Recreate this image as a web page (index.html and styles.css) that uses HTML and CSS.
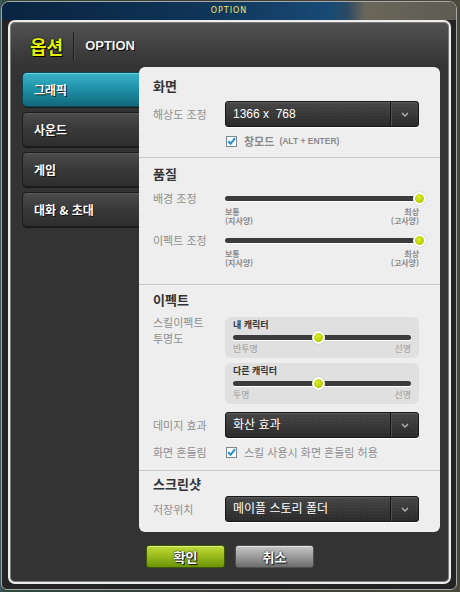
FILE: index.html
```html
<!DOCTYPE html>
<html lang="ko">
<head>
<meta charset="utf-8">
<title>OPTION</title>
<link rel="stylesheet" href="styles.css">
</head>
<body>
<div class="window">
  <div class="titlebar">OPTION</div>
  <div class="frame">
    <div class="header">
      <span class="title-ko">옵션</span>
      <span class="title-sep"></span>
      <span class="title-en">OPTION</span>
    </div>
    <div class="main">
      <nav class="tabs">
        <div class="tab active">그래픽</div>
        <div class="tab">사운드</div>
        <div class="tab">게임</div>
        <div class="tab">대화 &amp; 초대</div>
      </nav>
      <div class="panel">
        <section class="sec sec-screen">
          <h2 class="sec-title">화면</h2>
          <div class="row row-select">
            <div class="lbl">해상도 조정</div>
            <div class="select">
              <span class="select-text">1366 x&nbsp;&nbsp;768</span>
              <span class="select-btn"><svg width="8" height="5" viewBox="0 0 8 5"><polyline points="1,1 4,4 7,1" fill="none" stroke="#b8b8b8" stroke-width="1.3"/></svg></span>
            </div>
          </div>
          <div class="row row-check">
            <div class="lbl"></div>
            <span class="checkbox"><svg width="9" height="9" viewBox="0 0 9 9"><polyline points="1.2,4.2 3.6,6.8 8,1.2" fill="none" stroke="#1e8fd2" stroke-width="2"/></svg></span>
            <span class="check-strong">창모드</span><span class="hint">(ALT + ENTER)</span>
          </div>
        </section>

        <section class="sec sec-quality">
          <h2 class="sec-title">품질</h2>
          <div class="row row-slider first">
            <div class="lbl">배경 조정</div>
            <div class="slider"><div class="track"></div><div class="knob" style="left:100%"></div></div>
          </div>
          <div class="scale">
            <div class="scale-col"><div class="scale-line">보통</div><div class="scale-line">(지사양)</div></div>
            <div class="scale-col r"><div class="scale-line">최상</div><div class="scale-line">(고사양)</div></div>
          </div>
          <div class="row row-slider second">
            <div class="lbl">이펙트 조정</div>
            <div class="slider"><div class="track"></div><div class="knob" style="left:100%"></div></div>
          </div>
          <div class="scale">
            <div class="scale-col"><div class="scale-line">보통</div><div class="scale-line">(지사양)</div></div>
            <div class="scale-col r"><div class="scale-line">최상</div><div class="scale-line">(고사양)</div></div>
          </div>
        </section>

        <section class="sec sec-effect">
          <h2 class="sec-title">이펙트</h2>
          <div class="row row-effect">
            <div class="lbl lbl-multi">스킬이펙트<br>투명도</div>
            <div class="subboxes">
              <div class="subbox">
                <div class="sub-title">내 캐릭터</div>
                <div class="sub-slider"><div class="track"></div><div class="knob" style="left:48.3%"></div></div>
                <div class="sub-scale"><span>반투명</span><span>선명</span></div>
              </div>
              <div class="subbox">
                <div class="sub-title">다른 캐릭터</div>
                <div class="sub-slider"><div class="track"></div><div class="knob" style="left:47.8%"></div></div>
                <div class="sub-scale"><span>투명</span><span>선명</span></div>
              </div>
            </div>
          </div>
          <div class="row row-damage">
            <div class="lbl">데미지 효과</div>
            <div class="select">
              <span class="select-text">화산 효과</span>
              <span class="select-btn"><svg width="8" height="5" viewBox="0 0 8 5"><polyline points="1,1 4,4 7,1" fill="none" stroke="#b8b8b8" stroke-width="1.3"/></svg></span>
            </div>
          </div>
          <div class="row row-shake">
            <div class="lbl">화면 흔들림</div>
            <span class="checkbox"><svg width="9" height="9" viewBox="0 0 9 9"><polyline points="1.2,4.2 3.6,6.8 8,1.2" fill="none" stroke="#1e8fd2" stroke-width="2"/></svg></span>
            <span class="check-text">스킬 사용시 화면 흔들림 허용</span>
          </div>
        </section>

        <section class="sec sec-shot">
          <h2 class="sec-title">스크린샷</h2>
          <div class="row row-folder">
            <div class="lbl">저장위치</div>
            <div class="select">
              <span class="select-text">메이플 스토리 폴더</span>
              <span class="select-btn"><svg width="8" height="5" viewBox="0 0 8 5"><polyline points="1,1 4,4 7,1" fill="none" stroke="#b8b8b8" stroke-width="1.3"/></svg></span>
            </div>
          </div>
        </section>
      </div>
    </div>
    <div class="buttons">
      <div class="btn btn-ok">확인</div>
      <div class="btn btn-cancel">취소</div>
    </div>
  </div>
</div>
</body>
</html>
```

FILE: styles.css
```css
* {
  box-sizing: border-box;
  margin: 0;
  padding: 0;
}

html, body {
  width: 460px;
  height: 592px;
  overflow: hidden;
}

body {
  background: linear-gradient(90deg, #3e5a66 0px, #2f4a3c 4px, #3a3c36 50%, #4a4a3c 100%);
  font-family: "Noto Sans CJK KR", "Noto Sans", sans-serif;
}

.window {
  margin: 1px 0 0 1px;
  width: 456px;
  height: 589px;
  border: 1px solid #a8a8a8;
  border-radius: 8px 8px 6px 6px;
  background: #242424;
  overflow: hidden;
}

.titlebar {
  height: 18px;
  background: linear-gradient(90deg, #0a2440 0%, #0f3558 45%, #184a76 72%, #2a4a62 76%, #6a665a 80%, #5e5c52 100%);
  color: #f2e46a;
  font: 8px/18px "DejaVu Sans", sans-serif;
  letter-spacing: 1px;
  text-align: center;
}

.frame {
  margin-left: 6px;
  width: 443px;
  height: 564px;
  border: 2px solid #ececec;
  border-radius: 7px;
  background: linear-gradient(#525252 0px, #3a3a3a 34px, #333333 46px, #333333 100%);
  box-shadow: inset 0 0 0 1px #7c7c7c;
  display: flex;
  flex-direction: column;
}

.header {
  height: 45px;
  display: flex;
  align-items: center;
  padding: 3px 0 0 20px;
}

.title-ko {
  font: bold 18px/22px "Noto Sans CJK KR", sans-serif;
  color: #e6f200;
  text-shadow: 1px 1px 0 #000, 0 0 2px #000;
}

.title-sep {
  width: 1px;
  height: 28px;
  background: #1e1e1e;
  box-shadow: 1px 0 0 #4c4c4c;
  margin: 0 11px 0 10px;
}

.title-en {
  font: bold 13px/16px "Liberation Sans", sans-serif;
  color: #f2f2f2;
  text-shadow: 1px 1px 0 #000;
}

.main {
  display: flex;
  padding-left: 12px;
  height: 465px;
}

.tabs {
  width: 117px;
  flex: none;
  padding-top: 5px;
  display: flex;
  flex-direction: column;
  gap: 5px;
}

.tab {
  height: 35px;
  padding-left: 11px;
  border: 1px solid #1c1c1c;
  border-right: none;
  border-radius: 5px 0 0 5px;
  background: linear-gradient(#4c4c4c 0%, #3a3a3a 45%, #2e2e2e 100%);
  box-shadow: inset 0 1px 0 #5a5a5a, 0 1px 0 #1a1a1a;
  color: #ffffff;
  font: bold 12px/33px "Noto Sans CJK KR", sans-serif;
  text-shadow: 1px 1px 0 #111;
}

.tab.active {
  background: linear-gradient(#3cb2c8 0%, #2094aa 45%, #11687a 100%);
  border-color: #0a4754;
  box-shadow: inset 0 1px 0 #6ad0e0, 0 1px 0 #1a1a1a;
}

.panel {
  width: 301px;
  flex: none;
  background: #eeeeee;
  border-radius: 6px;
  overflow: hidden;
}

.sec {
  padding: 0 21px 0 14px;
  border-bottom: 1px solid #c8c8c8;
}

.sec-shot {
  border-bottom: none;
}

.sec-title {
  font: bold 13px/18px "Noto Sans CJK KR", sans-serif;
  color: #333333;
}

.row {
  display: flex;
  align-items: center;
}

.lbl {
  width: 72px;
  flex: none;
  font: 11px/16px "Noto Sans CJK KR", sans-serif;
  color: #8e8e8e;
}

/* section: screen */
.sec-screen { padding-top: 10px; padding-bottom: 9px; }
.row-select { margin-top: 6px; }
.row-check { margin-top: 8px; height: 13px; }

/* section: quality */
.sec-quality { padding-top: 7px; padding-bottom: 18px; }
.row-slider { height: 16px; }
.row-slider.first { margin-top: 7px; }
.row-slider.second { margin-top: 8px; }

/* section: effect */
.sec-effect { padding-top: 6px; padding-bottom: 11px; }
.row-effect { margin-top: 8px; align-items: flex-start; }
.lbl-multi { margin-top: -3px; }
.row-damage { margin-top: 8px; }
.row-shake { margin-top: 7px; height: 14px; }

/* section: screenshot */
.sec-shot { padding-top: 4px; padding-bottom: 10px; }
.row-folder { margin-top: 3px; }

.select {
  width: 194px;
  height: 26px;
  flex: none;
  display: flex;
  border: 1px solid #181818;
  border-radius: 3px;
  background-color: #2e2e2e;
  background-image:
    radial-gradient(rgba(255,255,255,0.05) 0.8px, transparent 1px),
    linear-gradient(#474747, #2a2a2a);
  background-size: 3px 3px, 100% 100%;
  box-shadow: inset 0 1px 0 #5a5a5a, 0 1px 0 #ffffff;
}

.select-text {
  flex: 1;
  padding-left: 7px;
  color: #ffffff;
  font: 12px/24px "Liberation Sans", "Noto Sans CJK KR", sans-serif;
  white-space: nowrap;
}

.select-btn {
  width: 28px;
  flex: none;
  border-left: 1px solid #141414;
  box-shadow: inset 1px 0 0 #505050;
  display: flex;
  align-items: center;
  justify-content: center;
}

.checkbox {
  width: 11px;
  height: 11px;
  flex: none;
  margin-left: 1px;
  border: 1px solid #7d8790;
  background: #ffffff;
  display: flex;
  align-items: center;
  justify-content: center;
}

.check-strong {
  margin-left: 7px;
  font: bold 11px/13px "Noto Sans CJK KR", sans-serif;
  color: #8a8a8a;
}

.hint {
  margin-left: 5px;
  font: bold 8.5px/13px "Liberation Sans", sans-serif;
  color: #8a8a8a;
}

.check-text {
  margin-left: 7px;
  font: 11px/14px "Noto Sans CJK KR", sans-serif;
  color: #8e8e8e;
  white-space: nowrap;
}

.slider {
  position: relative;
  width: 194px;
  height: 16px;
  display: flex;
  align-items: center;
}

.track {
  width: 100%;
  height: 5px;
  border-radius: 3px;
  background: #3c3c3c;
  box-shadow: 0 1px 0 #ffffff;
}

.knob {
  position: absolute;
  top: 50%;
  width: 13px;
  height: 13px;
  margin: -6.5px 0 0 -6.5px;
  border-radius: 50%;
  border: 2px solid #ffffff;
  background: radial-gradient(circle at 40% 35%, #dcee30, #b4cc00 70%);
  box-shadow: 0 0 1px 0 #7a7a7a;
}

.scale {
  margin-left: 72px;
  width: 194px;
  height: 18px;
  padding-top: 1px;
  display: flex;
  justify-content: space-between;
  color: #8a8a8a;
}

.scale-col {
  display: flex;
  flex-direction: column;
}

.scale-col.r {
  align-items: flex-end;
}

.scale-line {
  height: 9px;
  font: bold 8px/9px "Noto Sans CJK KR", sans-serif;
  white-space: nowrap;
}

.subboxes {
  width: 194px;
  display: flex;
  flex-direction: column;
  gap: 5px;
}

.subbox {
  height: 41px;
  padding: 2px 8px 0;
  border-radius: 6px;
  background: #e0e0e0;
}

.sub-title {
  height: 12px;
  font: bold 9px/12px "Noto Sans CJK KR", sans-serif;
  color: #333333;
}

.sub-slider {
  position: relative;
  height: 12px;
  display: flex;
  align-items: center;
}

.sub-scale {
  height: 12px;
  display: flex;
  justify-content: space-between;
  font: 9px/12px "Noto Sans CJK KR", sans-serif;
  color: #9a9a9a;
}

.buttons {
  display: flex;
  gap: 10px;
  margin-top: 13px;
  padding-left: 136px;
}

.btn {
  width: 79px;
  height: 23px;
  border-radius: 3px;
  text-align: center;
  color: #ffffff;
  font: bold 13px/21px "Noto Sans CJK KR", sans-serif;
  text-shadow: 0 0 2px #000, 1px 1px 0 #222;
}

.btn-ok {
  border: 1px solid #3c5800;
  background: linear-gradient(#c2da3a 0%, #98ba1c 50%, #6a9408 100%);
  box-shadow: inset 0 1px 0 #e0f080;
}

.btn-cancel {
  border: 1px solid #4e4e4e;
  background: linear-gradient(#c8c8c8 0%, #9c9c9c 50%, #6c6c6c 100%);
  box-shadow: inset 0 1px 0 #e4e4e4;
}
```
